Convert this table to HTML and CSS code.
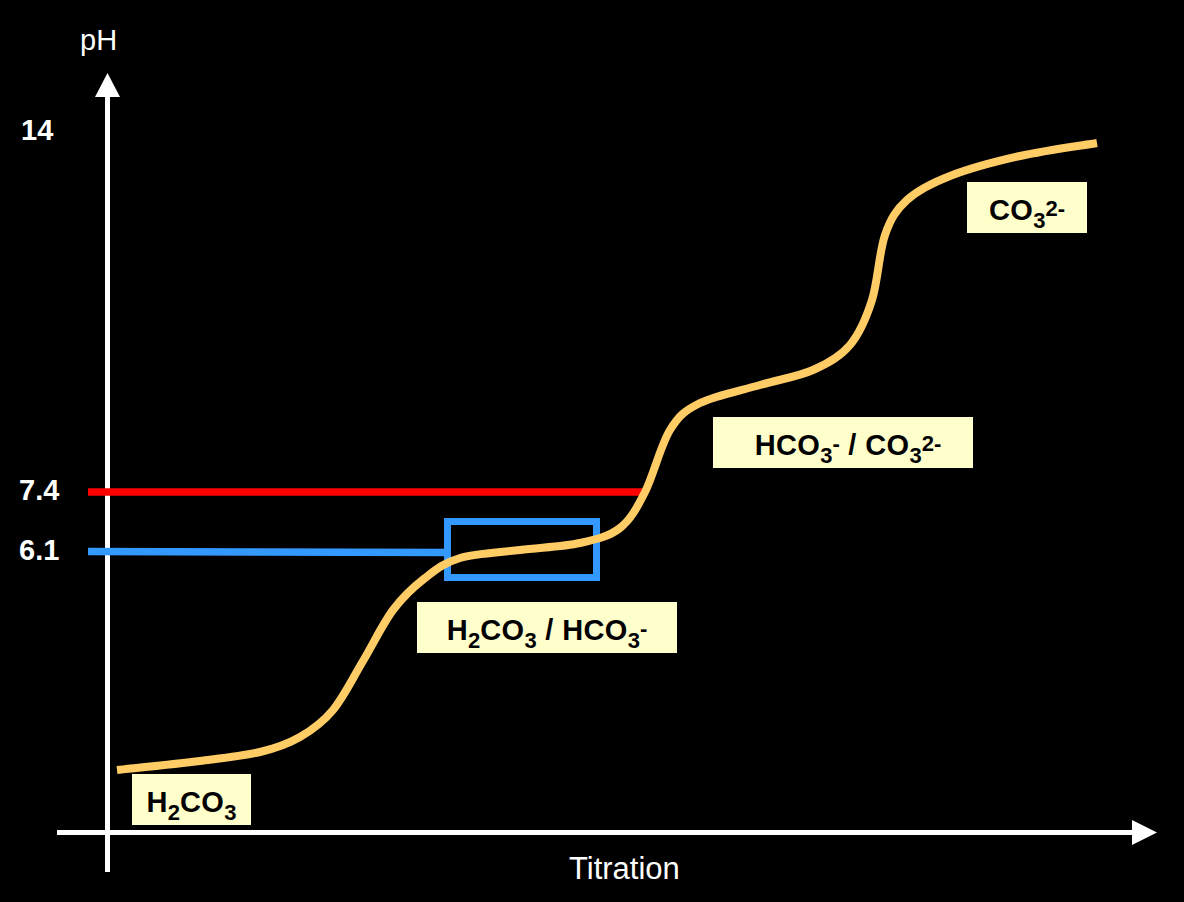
FILE: index.html
```html
<!DOCTYPE html>
<html lang="en">
<head>
<meta charset="utf-8">
<title>Bicarbonate titration curve</title>
<link rel="stylesheet" href="styles.css">
</head>
<body>
<div class="canvas">
  <svg class="plot" width="1184" height="902" viewBox="0 0 1184 902" xmlns="http://www.w3.org/2000/svg">
    <!-- axes -->
    <line x1="107.5" y1="96" x2="107.5" y2="872" stroke="#ffffff" stroke-width="5"/>
    <polygon points="95,97 120,97 107.5,73" fill="#ffffff"/>
    <line x1="57" y1="832.5" x2="1133" y2="832.5" stroke="#ffffff" stroke-width="5"/>
    <polygon points="1132,820 1132,845 1157,832.5" fill="#ffffff"/>
    <!-- reference lines -->
    <line x1="88" y1="492" x2="646" y2="492" stroke="#ff0000" stroke-width="7.5"/>
    <line x1="88" y1="551.5" x2="447" y2="552.5" stroke="#3399ff" stroke-width="7.5"/>
    <rect x="447.5" y="521.5" width="149" height="56" fill="none" stroke="#3399ff" stroke-width="7"/>
    <!-- titration curve -->
    <path fill="none" stroke="#ffcc66" stroke-width="8" stroke-linejoin="round"
      d="M117,770 C130.8,768.5 176.2,764 200,761
         C223.8,758 243.3,756 260,752
         C276.7,748 287.8,744 300,737
         C312.2,730 322.5,722.7 333,710
         C343.5,697.3 353,677.7 363,661
         C373,644.3 382.7,623.8 393,610
         C403.3,596.2 413.8,586.7 425,578
         C436.2,569.3 444.2,562.7 460,558
         C475.8,553.3 500,552.5 520,550
         C540,547.5 563.3,546.7 580,543
         C596.7,539.3 609.2,536.5 620,528
         C630.8,519.5 636.7,508.3 645,492
         C653.3,475.7 660.8,444.8 670,430
         C679.2,415.2 685,410.5 700,403
         C715,395.5 741.2,390.5 760,385
         C778.8,379.5 798,376.7 813,370
         C828,363.3 840.2,356.7 850,345
         C859.8,333.3 866.2,318.3 872,300
         C877.8,281.7 879.2,251.7 885,235
         C890.8,218.3 896.2,209.8 907,200
         C917.8,190.2 931.2,183.3 950,176
         C968.8,168.7 995.5,161.5 1020,156
         C1044.5,150.5 1084.2,145.2 1097,143"/>
  </svg>

  <div class="axis-title ph">pH</div>
  <div class="axis-title titration">Titration</div>

  <div class="tick t14">14</div>
  <div class="tick t74">7.4</div>
  <div class="tick t61">6.1</div>

  <div class="species s-h2co3">H<sub>2</sub>CO<sub>3</sub></div>
  <div class="species s-h2co3-hco3">H<sub>2</sub>CO<sub>3</sub> / HCO<sub>3</sub><sup>-</sup></div>
  <div class="species s-hco3-co3">HCO<sub>3</sub><sup>-</sup> / CO<sub>3</sub><sup>2-</sup></div>
  <div class="species s-co3">CO<sub>3</sub><sup>2-</sup></div>
</div>
</body>
</html>
```

FILE: styles.css
```css
* {
  box-sizing: border-box;
}

html, body {
  margin: 0;
  padding: 0;
  background: #000000;
}

body {
  font-family: "Liberation Sans", Arial, sans-serif;
  color: #ffffff;
}

.canvas {
  position: relative;
  width: 1184px;
  height: 902px;
  background: #000000;
  overflow: hidden;
}

.plot {
  position: absolute;
  left: 0;
  top: 0;
  display: block;
}

.axis-title {
  position: absolute;
  line-height: 1;
  font-weight: 400;
  color: #ffffff;
  white-space: nowrap;
}

.ph {
  left: 80px;
  top: 25.5px;
  font-size: 29px;
}

.titration {
  left: 569px;
  top: 853px;
  font-size: 31px;
}

.tick {
  position: absolute;
  font-size: 29px;
  font-weight: 700;
  line-height: 1;
  color: #ffffff;
}

.t14 { left: 21px; top: 115.5px; }
.t74 { left: 19px; top: 475.5px; }
.t61 { left: 19px; top: 535.5px; }

.species {
  position: absolute;
  height: 51px;
  padding-top: 13.5px;
  background: #ffffcc;
  color: #000000;
  font-size: 29px;
  font-weight: 700;
  line-height: 29px;
  letter-spacing: 0.4px;
  text-align: center;
  white-space: nowrap;
}

.species sub,
.species sup {
  font-size: 22px;
  line-height: 0;
  letter-spacing: 0;
}

.species sub {
  vertical-align: -8px;
}

.species sup {
  vertical-align: 4px;
}

.s-h2co3 {
  left: 132px;
  top: 774px;
  width: 119px;
}

.s-h2co3-hco3 {
  left: 417px;
  top: 602px;
  width: 260px;
}

.s-hco3-co3 {
  left: 713px;
  top: 417px;
  width: 260px;
  padding-left: 10px;
}

.s-co3 {
  left: 967px;
  top: 182px;
  width: 120px;
}
```
